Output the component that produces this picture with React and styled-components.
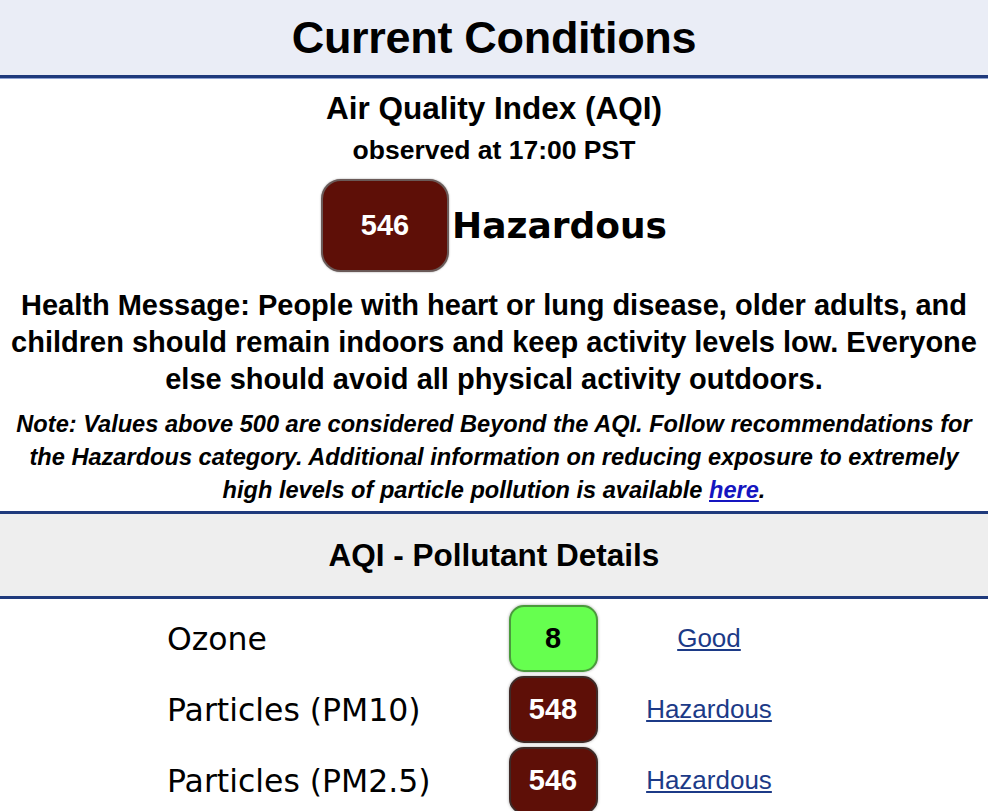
import React from 'react'
import styled, { createGlobalStyle } from 'styled-components'

const GlobalStyle = createGlobalStyle`
  html, body {
    margin: 0;
    padding: 0;
    background: #ffffff;
    font-family: "Liberation Sans", Arial, sans-serif;
    color: #000;
  }
`

const pollutants = [
  { name: 'Ozone', aqi: 8, level: 'Good' },
  { name: 'Particles (PM10)', aqi: 548, level: 'Hazardous' },
  { name: 'Particles (PM2.5)', aqi: 546, level: 'Hazardous' },
]

const levelColors = {
  Good: { bg: '#66ff4f', fg: '#000', border: '#4a9a3c' },
  Hazardous: { bg: '#5e0f07', fg: '#fff', border: '#3f2a27' },
}

const App = () => {
  return (
    <Page>
      <GlobalStyle />
      <Header>
        <Title>Current Conditions</Title>
      </Header>
      <Current>
        <Subtitle>Air Quality Index (AQI)</Subtitle>
        <Observed>observed at 17:00 PST</Observed>
        <Reading>
          <BigBadge>546</BigBadge>
          <Category>Hazardous</Category>
        </Reading>
        <Health>
          Health Message: People with heart or lung disease, older adults, and
          <br />
          children should remain indoors and keep activity levels low. Everyone
          <br />
          else should avoid all physical activity outdoors.
        </Health>
        <Note>
          Note: Values above 500 are considered Beyond the AQI. Follow recommendations for
          <br />
          the Hazardous category. Additional information on reducing exposure to extremely
          <br />
          high levels of particle pollution is available <NoteLink href="#">here</NoteLink>.
        </Note>
      </Current>
      <SectionHeader>
        <SectionTitle>AQI - Pollutant Details</SectionTitle>
      </SectionHeader>
      <Table>
        {pollutants.map((p) => (
          <Row key={p.name}>
            <Name>{p.name}</Name>
            <BadgeCell>
              <SmallBadge $level={p.level}>{p.aqi}</SmallBadge>
            </BadgeCell>
            <LevelCell>
              <LevelLink href="#">{p.level}</LevelLink>
            </LevelCell>
          </Row>
        ))}
      </Table>
    </Page>
  )
}

export default App

const Page = styled.div`
  width: 988px;
  height: 811px;
  overflow: hidden;
`

const Header = styled.div`
  background: #eaedf6;
  height: 75px;
  display: flex;
  align-items: center;
  justify-content: center;
  border-bottom: 3px solid #1f3a7c;
  box-shadow: 0 1px 0 #8fa3d3;
`

const Title = styled.h1`
  margin: 0;
  font-size: 45px;
  font-weight: bold;
  letter-spacing: -0.3px;
`

const Current = styled.div`
  display: flex;
  flex-direction: column;
  align-items: center;
  text-align: center;
  padding: 11px 0 0;
`

const Subtitle = styled.div`
  font-size: 31.5px;
  font-weight: bold;
  line-height: 38px;
`

const Observed = styled.div`
  font-size: 26.5px;
  font-weight: bold;
  line-height: 30px;
  margin-top: 8px;
`

const Reading = styled.div`
  display: flex;
  align-items: center;
  margin-top: 14px;
`

const BigBadge = styled.div`
  width: 124px;
  height: 89px;
  border-radius: 20px;
  background: #5e0f07;
  border: 2px solid #6a5a58;
  box-shadow: 0 0 2px rgba(0, 0, 0, 0.4);
  color: #fff;
  font-size: 29px;
  font-weight: bold;
  display: flex;
  align-items: center;
  justify-content: center;
  margin-right: 3px;
`

const Category = styled.div`
  font-family: "DejaVu Sans", Verdana, sans-serif;
  font-size: 36px;
  font-weight: bold;
`

const Health = styled.p`
  margin: 15px 0 0;
  font-size: 29px;
  font-weight: bold;
  line-height: 37px;
  white-space: nowrap;
`

const Note = styled.p`
  margin: 10px 0 0;
  font-size: 23.6px;
  font-weight: bold;
  font-style: italic;
  line-height: 33px;
  white-space: nowrap;
`

const NoteLink = styled.a`
  color: #1515c0;
  text-decoration: underline;
`

const SectionHeader = styled.div`
  margin-top: 4px;
  background: #eeeeee;
  border-top: 3px solid #1f3a7c;
  border-bottom: 3px solid #1f3a7c;
  height: 82px;
  display: flex;
  align-items: center;
  justify-content: center;
`

const SectionTitle = styled.h2`
  margin: 0;
  font-size: 31.5px;
  font-weight: bold;
`

const Table = styled.div`
  display: flex;
  flex-direction: column;
  padding-top: 4px;
`

const Row = styled.div`
  display: grid;
  grid-template-columns: 340px 92px 220px;
  align-items: center;
  height: 71px;
  padding-left: 167px;
`

const Name = styled.div`
  font-family: "DejaVu Sans", Verdana, sans-serif;
  font-size: 31.5px;
`

const BadgeCell = styled.div`
  display: flex;
  justify-content: center;
`

const SmallBadge = styled.div`
  width: 89px;
  height: 67px;
  border-radius: 15px;
  background: ${(p) => levelColors[p.$level].bg};
  color: ${(p) => levelColors[p.$level].fg};
  border: 2px solid ${(p) => levelColors[p.$level].border};
  box-shadow: 0 0 3px rgba(0, 0, 0, 0.35);
  font-size: 29px;
  font-weight: bold;
  display: flex;
  align-items: center;
  justify-content: center;
  box-sizing: border-box;
`

const LevelCell = styled.div`
  text-align: center;
`

const LevelLink = styled.a`
  color: #1c3a87;
  font-size: 26px;
  text-decoration: underline;
`
